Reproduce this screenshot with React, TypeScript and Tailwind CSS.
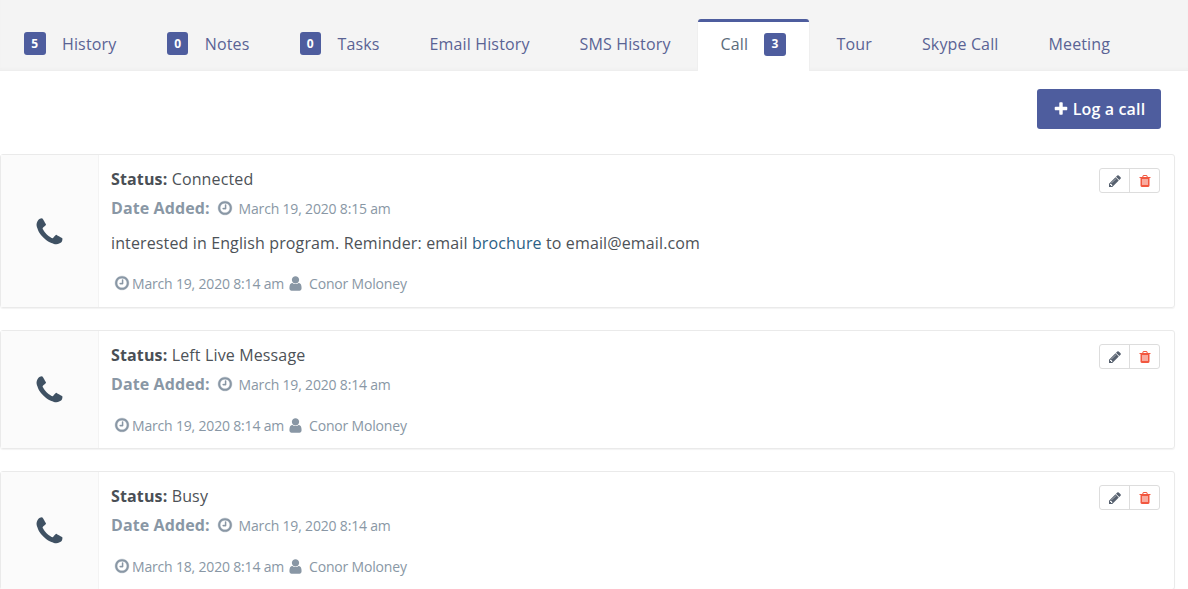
const D = {
  phone: "M1600 1240q0 27-10 70.5t-21 68.5q-21 50-122 106-94 51-186 51-27 0-53-3.5t-57.5-12.5-47-14.5-55.5-20.5-49-18q-98-35-175-83-127-79-264-216t-216-264q-48-77-83-175-3-9-18-49t-20.5-55.5-14.5-47-12.5-57.5-3.5-53q0-92 51-186 56-101 106-122 25-11 68.5-21t70.5-10q14 0 21 3 18 6 53 76 11 19 30 54t35 63.5 31 53.5q3 4 17.5 25t21.5 35.5 7 28.5q0 20-28.5 50t-62 55-62 53-28.5 46q0 9 5 22.5t8.5 20.5 14 24 11.5 19q76 137 174 235t235 174q2 1 19 11.5t24 14 20.5 8.5 22.5 5q18 0 46-28.5t53-62 55-62 50-28.5q14 0 28.5 7t35.5 21.5 25 17.5q25 15 53.5 31t63.5 35 54 30q70 35 76 53 3 7 3 21z",
  clock: "M1024 544v448q0 14-9 23t-23 9h-320q-14 0-23-9t-9-23v-64q0-14 9-23t23-9h224v-352q0-14 9-23t23-9h64q14 0 23 9t9 23zm416 352q0-148-73-273t-198-198-273-73-273 73-198 198-73 273 73 273 198 198 273 73 273-73 198-198 73-273zm224 0q0 209-103 385.5t-279.5 279.5-385.5 103-385.5-103-279.5-279.5-103-385.5 103-385.5 279.5-279.5 385.5-103 385.5 103 279.5 279.5 103 385.5z",
  user: "M1536 1399q0 109-62.5 187t-150.5 78h-854q-88 0-150.5-78t-62.5-187q0-85 8.5-160.5t31.5-152 58.5-131 94-89 134.5-34.5q131 128 313 128t313-128q76 0 134.5 34.5t94 89 58.5 131 31.5 152 8.5 160.5zm-256-887q0 159-112.5 271.5t-271.5 112.5-271.5-112.5-112.5-271.5 112.5-271.5 271.5-112.5 271.5 112.5 112.5 271.5z",
  pencil: "M491 1536l91-91-235-235-91 91v107h128v128h107zm523-928q0-22-22-22-10 0-17 7l-542 542q-7 7-7 17 0 22 22 22 10 0 17-7l542-542q7-7 7-17zm-54-192l416 416-832 832h-416v-416zm683 96q0 53-37 90l-166 166-416-416 166-165q36-38 90-38 53 0 91 38l235 234q37 39 37 91z",
  trash: "M704 1376v-704q0-14-9-23t-23-9h-64q-14 0-23 9t-9 23v704q0 14 9 23t23 9h64q14 0 23-9t9-23zm256 0v-704q0-14-9-23t-23-9h-64q-14 0-23 9t-9 23v704q0 14 9 23t23 9h64q14 0 23-9t9-23zm256 0v-704q0-14-9-23t-23-9h-64q-14 0-23 9t-9 23v704q0 14 9 23t23 9h64q14 0 23-9t9-23zm-544-992h448l-48-117q-7-9-17-11h-317q-10 2-17 11zm928 32v64q0 14-9 23t-23 9h-96v948q0 83-47 143.5t-113 60.5h-832q-66 0-113-58.5t-47-141.5v-952h-96q-14 0-23-9t-9-23v-64q0-14 9-23t23-9h309l70-167q15-37 54-63t79-26h320q40 0 79 26t54 63l70 167h309q14 0 23 9t9 23z",
  plus: "M1600 736v192q0 40-28 68t-68 28h-416v416q0 40-28 68t-68 28h-192q-40 0-68-28t-28-68v-416h-416q-40 0-68-28t-28-68v-192q0-40 28-68t68-28h416v-416q0-40 28-68t68-28h192q40 0 68 28t28 68v416h416q40 0 68 28t28 68z",
};

function Icon({ d, className }: { d: string; className: string }) {
  return (
    <svg viewBox="0 0 1792 1792" fill="currentColor" className={className}>
      <path d={d} />
    </svg>
  );
}

function Badge({ n }: { n: number }) {
  return (
    <span className="flex h-[23px] w-[21.5px] items-center justify-center rounded-[3px] bg-[#4e5d9e] text-[12px] font-bold tracking-normal text-white">
      {n}
    </span>
  );
}

function Tab({ label, badge, pad }: { label: string; badge?: number; pad: string }) {
  return (
    <div className={`flex h-[51px] items-center pt-[1px] pb-[2px] ${pad} text-[16px] tracking-[0.14px] text-[#5a6394]`}>
      {badge !== undefined && (
        <span className="mr-[16.5px] -mt-[1px]">
          <Badge n={badge} />
        </span>
      )}
      <span>{label}</span>
    </div>
  );
}

function Card({
  status,
  added,
  footer,
  note,
  className,
}: {
  status: string;
  added: string;
  footer: string;
  note?: boolean;
  className: string;
}) {
  return (
    <div className={`relative flex w-[1175px] rounded-[3px] border border-[#eaeaea] shadow-[0_1px_1px_rgba(0,0,0,0.05)] ${className}`}>
      <div className="flex w-[98px] shrink-0 items-center justify-center border-r border-[#f3f3f3] bg-[#fbfbfb] pt-[2px]">
        <Icon d={D.phone} className="h-[33px] w-[33px] text-[#3f5163]" />
      </div>
      <div className="flex-1 pl-[12px]">
        <div className="mt-[11px] h-[26px] text-[16px] leading-[26px] tracking-[0.14px] text-[#4d5257]">
          <b className="font-bold text-[#4a4f55]">Status:</b> {status}
        </div>
        <div className="mt-[3px] flex h-[26px] items-center text-[#8997a5]">
          <b className="text-[16px] font-bold tracking-[0.1px]">Date Added:</b>
          <Icon d={D.clock} className="ml-[7px] h-[16px] w-[16px] stroke-current stroke-[40]" />
          <span className="ml-[6px] text-[14px] tracking-[-0.18px]">{added}</span>
        </div>
        {note && (
          <div className="mt-[9px] h-[26px] text-[16px] leading-[26px] tracking-[0.13px] text-[#4d5257]">
            interested in English program. Reminder: email <span className="text-[#2c5f85]">brochure</span> to email@email.com
          </div>
        )}
        <div className={`ml-[3px] flex h-[24px] items-center text-[14px] tracking-[-0.18px] text-[#8997a5] ${note ? "mt-[15px]" : "mt-[16px]"}`}>
          <Icon d={D.clock} className="h-[16px] w-[16px] stroke-current stroke-[40]" />
          <span className="ml-[2px]">{footer}</span>
          <Icon d={D.user} className="ml-[3px] h-[17px] w-[17px]" />
          <span className="ml-[5px]">Conor Moloney</span>
        </div>
      </div>
      <div className="absolute right-[14px] top-[13px] flex h-[25px] w-[61px] rounded-[3px] border border-[#dddddd] bg-white">
        <div className="flex w-[30px] items-center justify-center border-r border-[#dddddd]">
          <Icon d={D.pencil} className="h-[14px] w-[14px] text-[#56606e]" />
        </div>
        <div className="flex flex-1 items-center justify-center">
          <Icon d={D.trash} className="h-[14px] w-[14px] text-[#f2573f]" />
        </div>
      </div>
    </div>
  );
}

export default function App() {
  return (
    <div className="h-[589px] w-[1188px] overflow-hidden bg-white font-['Open_Sans',sans-serif]">
      <div className="flex h-[71px] items-end border-b border-[#eeeeee] bg-[#f4f4f4] shadow-[inset_0_-2px_2px_rgba(0,0,0,0.015)]">
        <Tab label="History" badge={5} pad="pl-[24px] pr-[25.5px]" />
        <Tab label="Notes" badge={0} pad="pl-[25px] pr-[25px]" />
        <Tab label="Tasks" badge={0} pad="pl-[25px] pr-[25px]" />
        <Tab label="Email History" pad="pl-[25px] pr-[25px]" />
        <Tab label="SMS History" pad="pl-[25px] pr-[27px]" />
        <div className="relative z-10 -mb-px flex h-[52px] w-[111px] shrink-0 items-center rounded-t-[3px] border-t-[3px] border-t-[#4e5d9e] bg-white pb-[5px] pl-[23px] text-[16px] tracking-[0.14px] text-[#5b6b7b] shadow-[1px_0_0_#efefef,-1px_0_0_#efefef]">
          <span>Call</span>
          <span className="ml-[16px]">
            <Badge n={3} />
          </span>
        </div>
        <Tab label="Tour" pad="pl-[28px] pr-[25px]" />
        <Tab label="Skype Call" pad="pl-[25px] pr-[25px]" />
        <Tab label="Meeting" pad="pl-[25px] pr-[25px]" />
      </div>
      <div className="flex justify-end pr-[27px] pt-[18px]">
        <div className="flex h-[40px] w-[124px] items-center justify-center rounded-[3px] bg-[#4e5d9e] text-[16px] font-semibold tracking-[0.15px] text-white">
          <Icon d={D.plus} className="mr-[4px] h-[16px] w-[16px]" />
          Log a call
        </div>
      </div>
      <div className="mt-[25px] flex flex-col">
        <Card className="h-[154px]" status="Connected" added="March 19, 2020 8:15 am" footer="March 19, 2020 8:14 am" note />
        <Card className="mt-[22px] h-[119px]" status="Left Live Message" added="March 19, 2020 8:14 am" footer="March 19, 2020 8:14 am" />
        <Card className="mt-[22px] h-[119px]" status="Busy" added="March 19, 2020 8:14 am" footer="March 18, 2020 8:14 am" />
      </div>
    </div>
  );
}
